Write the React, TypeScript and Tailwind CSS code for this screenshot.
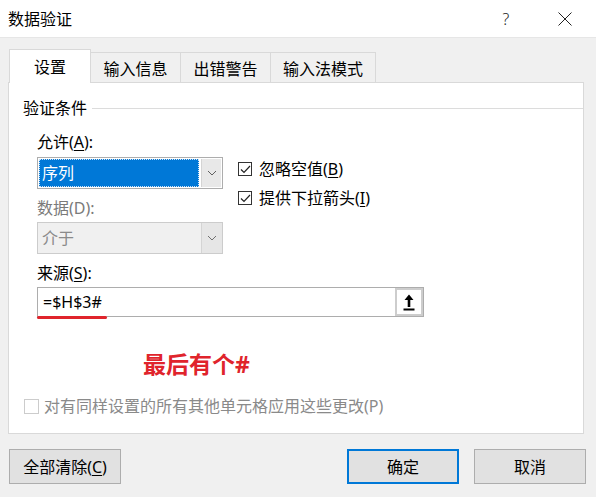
import React from 'react'

const font = { fontFamily: '"Noto Sans", "Noto Sans CJK SC", sans-serif' }

function Chevron({ color = '#606060' }: { color?: string }) {
  return (
    <svg width="10" height="6" viewBox="0 0 10 6" fill="none">
      <path d="M1 1l4 4 4-4" stroke={color} strokeWidth="1" />
    </svg>
  )
}

function Check() {
  return (
    <svg width="11" height="9" viewBox="0 0 11 9" fill="none">
      <path d="M1 4.5l3 3L10 1" stroke="#222" strokeWidth="1.2" />
    </svg>
  )
}

function CheckRow({ children }: { children: React.ReactNode }) {
  return (
    <div className="flex items-center leading-[20px]">
      <span className="flex h-[14px] w-[14px] items-center justify-center border border-[#333] bg-white">
        <Check />
      </span>
      <span className="ml-[7px]">{children}</span>
    </div>
  )
}

export default function App() {
  return (
    <div className="h-[497px] w-[596px] overflow-hidden bg-[#f0f0f0] text-[16px] text-black" style={font}>
      {/* title bar */}
      <div className="flex h-[38px] items-center border-b border-[#e6e6e6] bg-white pl-2">
        <span className="leading-[20px]">数据验证</span>
        <span className="ml-auto w-[10px] text-center text-[16px] font-light leading-[20px] text-[#222]">?</span>
        <svg className="ml-[47px] mr-[24px]" width="14" height="14" viewBox="0 0 14 14" fill="none">
          <path d="M0.5 0.5l13 13M13.5 0.5l-13 13" stroke="#222" strokeWidth="1" />
        </svg>
      </div>

      {/* tabs */}
      <div className="flex items-end pl-[9px] pt-[11px]">
        <div className="relative z-10 -mb-px flex h-[34px] w-[82px] items-center justify-center border border-b-0 border-[#d9d9d9] bg-white leading-[20px]">
          设置
        </div>
        {[
          { label: '输入信息', w: 'w-[90px]' },
          { label: '出错警告', w: 'w-[90px]' },
          { label: '输入法模式', w: 'w-[105px]' },
        ].map((t) => (
          <div
            key={t.label}
            className={`flex h-[30px] items-center justify-center border border-b-0 border-l-0 border-[#d9d9d9] bg-[#f0f0f0] pt-[3px] leading-[20px] ${t.w}`}
          >
            {t.label}
          </div>
        ))}
      </div>

      {/* panel */}
      <div className="ml-2 h-[352px] w-[576px] border border-[#d9d9d9] bg-white">
        <div className="mt-[15px] flex items-center pl-[14px]">
          <span className="leading-[20px]">验证条件</span>
          <div className="ml-[5px] h-px flex-1 bg-[#dcdcdc]" />
        </div>

        <div className="pl-[28px]">
          <div className="mt-[14px] leading-[20px]">
            允许(<span className="underline underline-offset-2">A</span>):
          </div>

          <div className="mt-[5px] flex">
            <div className="w-[186px]">
              <div className="flex h-[32px] border border-[#adadad] bg-white p-px">
                <div className="flex flex-1 items-center border border-dotted border-[#cfe3f5] bg-[#0078d7] pl-[2px] leading-[20px] text-white">
                  序列
                </div>
                <div className="ml-[2px] flex w-[20px] items-center justify-center border-l border-[#d4d4d4] bg-[#e8e8e8]">
                  <Chevron />
                </div>
              </div>

              <div className="mt-[9px] leading-[20px] text-[#7a7a7a]">数据(D):</div>

              <div className="mt-[4px] flex h-[32px] border border-[#cccccc] bg-[#f0f0f0]">
                <div className="flex flex-1 items-center pl-[4px] leading-[20px] text-[#8a8a8a]">介于</div>
                <div className="flex w-[21px] items-center justify-center border-l border-[#d4d4d4] bg-[#e6e6e6]">
                  <Chevron color="#707070" />
                </div>
              </div>
            </div>

            <div className="ml-[15px] mt-[2px] flex flex-col gap-[9px]">
              <CheckRow>
                忽略空值(<span className="underline underline-offset-2">B</span>)
              </CheckRow>
              <CheckRow>
                提供下拉箭头(<span className="underline underline-offset-2">I</span>)
              </CheckRow>
            </div>
          </div>

          <div className="mt-[9px] leading-[20px]">
            来源(<span className="underline underline-offset-2">S</span>):
          </div>

          <div className="relative mt-[4px] flex h-[30px] w-[387px] border border-[#adadad] bg-white">
            <div className="flex flex-1 items-center pl-[5px] leading-[20px]">=$H$3#</div>
            <div className="flex w-[28px] items-center justify-center border-[2px] border-[#cdcdcd] bg-white">
              <svg width="12" height="17" viewBox="0 0 12 17" fill="none">
                <path d="M6 0.5L10.5 6H7.3v7H4.7V6H1.5z" fill="#000" />
                <rect x="0.5" y="14.5" width="11" height="2" fill="#000" />
              </svg>
            </div>
            <div className="absolute left-[-1px] top-full h-[3px] w-[70px] rounded-full bg-[#e0242c]" />
          </div>

          <div className="ml-[106px] mt-[32px] text-[23px] font-bold leading-[30px] text-[#e0242c]">
            最后有个#
          </div>
        </div>

        <div className="mt-[17px] flex items-center pl-[15px] leading-[20px] text-[#8a8a8a]">
          <span className="h-[15px] w-[15px] border border-[#cccccc] bg-white" />
          <span className="ml-[5px]">对有同样设置的所有其他单元格应用这些更改(P)</span>
        </div>
      </div>

      {/* buttons */}
      <div className="mt-[15px] flex pl-[9px] pr-[10px]">
        <button className="h-[35px] w-[112px] border border-[#adadad] bg-[#e1e1e1] leading-[20px]">
          全部清除(<span className="underline underline-offset-2">C</span>)
        </button>
        <button className="ml-auto h-[35px] w-[112px] border-2 border-[#0078d7] bg-[#e1e1e1] leading-[20px]">
          确定
        </button>
        <button className="ml-[15px] h-[35px] w-[112px] border border-[#adadad] bg-[#e1e1e1] leading-[20px]">
          取消
        </button>
      </div>
    </div>
  )
}
